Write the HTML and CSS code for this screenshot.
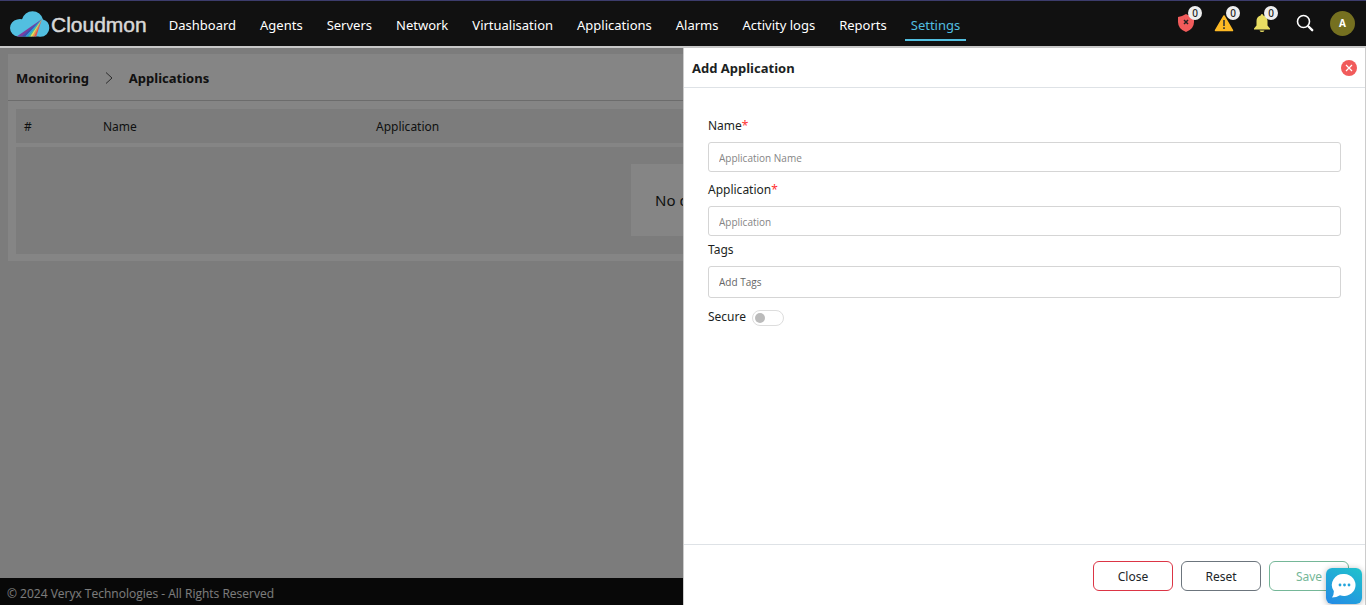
FILE: index.html
```html
<!DOCTYPE html>
<html lang="en">
<head>
<meta charset="utf-8">
<title>Cloudmon - Applications</title>
<link rel="stylesheet" href="styles.css">
</head>
<body>
<div class="app">
  <header class="topbar">
    <a class="brand" href="#">
      <svg class="brand-mark" viewBox="0 0 40 26" aria-hidden="true">
        <defs><clipPath id="cloud"><circle cx="8.500" cy="17" r="8.500"/><circle cx="10" cy="15" r="7"/><circle cx="22.500" cy="11" r="10.800"/><circle cx="30.500" cy="17" r="8.800"/><rect x="8" y="13" width="23" height="12.500"/></clipPath></defs>
        <g clip-path="url(#cloud)">
          <path fill="#52bfe0" d="M0 0H40V26H0Z"/>
          <path fill="#7b3fa0" d="M32 8L6 26H12Z"/>
          <path fill="#3d4fb0" d="M32 8L11 26H15Z"/>
          <path fill="#2a9fd8" d="M32 8L15 26H18Z"/>
          <path fill="#4fc08a" d="M32 8L18 26H20Z"/>
          <path fill="#f5e14a" d="M32 8L20 26H22Z"/>
          <path fill="#f59a3a" d="M32 8L22 26H24Z"/>
          <path fill="#e8504c" d="M32 8L24 26H26Z"/>
        </g>
      </svg>
      <span class="brand-name">Cloudmon</span>
    </a>
    <nav class="nav">
      <a href="#">Dashboard</a>
      <a href="#">Agents</a>
      <a href="#">Servers</a>
      <a href="#">Network</a>
      <a href="#">Virtualisation</a>
      <a href="#">Applications</a>
      <a href="#">Alarms</a>
      <a href="#">Activity logs</a>
      <a href="#">Reports</a>
      <a class="active" href="#">Settings</a>
    </nav>
    <div class="tools">
      <div class="alerts">
        <button class="tool" aria-label="Critical alarms">
          <svg width="20" height="20" viewBox="0 0 20 20"><path fill="#f15b5b" d="M10 1Q14 3.500 18 4V9Q18 16 10 19Q2 16 2 9V4Q6 3.500 10 1Z"/><path stroke="#222" stroke-width="1.500" d="M8 7L12 11M12 7L8 11"/></svg>
          <span class="badge">0</span>
        </button>
        <button class="tool" aria-label="Warnings">
          <svg width="20" height="20" viewBox="0 0 20 20"><path fill="#fdb924" stroke="#fdb924" stroke-width="1.500" stroke-linejoin="round" d="M10 3L18.500 17.500H1.500Z"/><path stroke="#333" stroke-width="1.600" d="M10 7V13M10 14.200V16"/></svg>
          <span class="badge">0</span>
        </button>
        <button class="tool" aria-label="Notifications">
          <svg width="20" height="20" viewBox="0 0 20 20"><path fill="#e8dd62" d="M10 1Q11.300 1 11.300 2.500Q15.500 3.500 15.500 8V12.500L18 15.500V16.500H2V15.500L4.500 12.500V8Q4.500 3.500 8.700 2.500Q8.700 1 10 1ZM7.500 17.500H12.500Q12 19 10 19Q8 19 7.500 17.500Z"/></svg>
          <span class="badge">0</span>
        </button>
      </div>
      <button class="tool" aria-label="Search">
        <svg width="20" height="20" viewBox="0 0 20 20" fill="none" stroke="#fff"><circle cx="8.500" cy="8.500" r="6" stroke-width="1.600"/><path stroke-width="2.400" stroke-linecap="round" d="M13.500 13.500L17.200 17.200"/></svg>
      </button>
      <button class="avatar" aria-label="Account">A</button>
    </div>
  </header>

  <div class="stage">
    <main class="page">
      <section class="card">
        <div class="crumbs">
          <a href="#">Monitoring</a>
          <svg width="8" height="14" viewBox="0 0 8 14" fill="none" stroke="#555" aria-hidden="true"><path d="M1 1.500L7 7L1 12.500"/></svg>
          <a href="#">Applications</a>
        </div>
        <div class="listing">
          <table class="grid">
            <thead><tr><th class="col-index">#</th><th class="col-name">Name</th><th>Application</th></tr></thead>
          </table>
          <div class="empty"><p class="empty-note">No data</p></div>
        </div>
      </section>
    </main>
    <footer class="footer">© 2024 Veryx Technologies - All Rights Reserved</footer>
    <div class="backdrop"></div>
    <form class="drawer">
      <div class="drawer-head">
        <h1>Add Application</h1>
        <button class="dismiss" type="button" aria-label="Close panel">
          <svg width="16" height="16" viewBox="0 0 16 16"><circle cx="8" cy="8" r="8" fill="#f15b5b"/><path stroke="#fff" stroke-width="1.200" d="M5 5L11 11M11 5L5 11"/></svg>
        </button>
      </div>
      <div class="drawer-body">
        <div class="field">
          <label for="name">Name<span class="req">*</span></label>
          <input id="name" type="text" placeholder="Application Name">
        </div>
        <div class="field">
          <label for="application">Application<span class="req">*</span></label>
          <input id="application" type="text" placeholder="Application">
        </div>
        <div class="field tags">
          <label for="tags">Tags</label>
          <input id="tags" type="text" placeholder="Add Tags">
        </div>
        <div class="switch-row">
          <label for="secure">Secure</label>
          <input id="secure" class="switch" type="checkbox" role="switch">
        </div>
      </div>
      <div class="drawer-foot">
        <button class="btn btn-close" type="button">Close</button>
        <button class="btn btn-reset" type="reset">Reset</button>
        <button class="btn btn-save" type="submit" disabled>Save</button>
      </div>
    </form>
    <button class="chat" aria-label="Open chat">
      <svg width="26" height="26" viewBox="0 0 26 26"><path fill="#fff" d="M13.500 1A11.500 11 0 1 1 9 22.300Q5.500 24.500 1 24.500Q3 22 2.800 18A11.500 11 0 0 1 13.500 1Z"/><g fill="#22a4dc"><circle cx="9" cy="12" r="1.400"/><circle cx="13.500" cy="12" r="1.400"/><circle cx="18" cy="12" r="1.400"/></g></svg>
    </button>
  </div>
</div>
</body>
</html>
```
FILE: styles.css
```css
* { box-sizing: border-box; }
body { margin: 0; font-family: "Noto Sans", "Open Sans", sans-serif; font-size: 12px; line-height: 16px; color: #1c1f23; }
a { color: inherit; text-decoration: none; }
button, input { font: inherit; color: inherit; }
button { padding: 0; border: 0; background: none; cursor: pointer; }
svg { display: block; }

.app { display: flex; flex-direction: column; min-height: 100vh; background: #eee; }

.topbar { display: flex; align-items: center; height: 48px; padding: 0 11px 0 10px; background: #111; border-top: 1px solid #3c3c6c; border-bottom: 2px solid #c8c8c8; }
.brand { display: flex; align-items: center; gap: 1px; color: #d8d8d8; }
.brand-mark { width: 40px; height: 26px; }
.brand-name { padding-top: 3px; font: 21px/24px "Liberation Sans", Arial, sans-serif; -webkit-text-stroke: 0.5px #d8d8d8; }
.nav { display: flex; gap: 12px; margin-left: 16px; font-size: 13px; line-height: 20px; color: #fff; white-space: nowrap; }
.nav a { padding: 9px 6px 4px; border-bottom: 2px solid transparent; }
.nav .active { color: #52bfe0; border-color: #52bfe0; }
.tools { display: flex; align-items: center; gap: 15px; margin-left: auto; padding-bottom: 1px; }
.alerts { display: flex; gap: 18px; margin-right: 8px; }
.tool { position: relative; }
.badge { position: absolute; top: -7px; right: -6px; width: 14px; height: 14px; border-radius: 7px; background: #eee; color: #222; font-size: 10px; font-weight: 500; line-height: 14px; text-align: center; }
.avatar { width: 25px; height: 25px; border-radius: 50%; background: #757020; color: #fff; font-size: 10px; font-weight: 700; }

.stage { position: relative; display: flex; flex: 1; flex-direction: column; }
.page { flex: 1; padding: 6px 8px; }
.card { background: #fff; }
.crumbs { display: flex; align-items: center; gap: 16px; height: 47px; padding: 2px 8px 0; border-bottom: 1px solid #d0d0d0; font-size: 13px; font-weight: 700; color: #222; }
.listing { padding: 8px 8px 7px; }
.grid { width: 100%; height: 34px; border-collapse: collapse; background: #eee; }
.grid th { padding: 2px 8px 0; font-weight: 400; text-align: left; }
.grid .col-index { width: 79px; }
.grid .col-name { width: 273px; }
.empty { display: flex; justify-content: center; margin-top: 4px; padding: 17px 0 18px; background: #eee; }
.empty-note { margin: 0; padding: 24px; background: #fff; font-size: 15px; line-height: 24px; }
.footer { padding: 8px 7px 3px; background: #111; color: #eee; font-family: "Open Sans", sans-serif; }
.backdrop { position: absolute; inset: 0; background: rgba(0, 0, 0, 0.48); }

.drawer { position: absolute; inset: 0 0 0 auto; width: 50%; display: flex; flex-direction: column; background: #fff; border: solid #ccc; border-width: 0 1px; }
.drawer-head { display: flex; align-items: center; justify-content: space-between; height: 40px; padding: 0 8px; border-bottom: 1px solid #dee2e6; }
.drawer-head h1 { margin: 0; font-size: 13px; line-height: 20px; font-weight: 700; }
.drawer-body { flex: 1; padding: 30px 24px; }
.field { display: flex; flex-direction: column; gap: 8px; margin-bottom: 10px; }
.field input { width: 100%; height: 30px; padding: 2px 10px 0; border: 1px solid #d5d5d5; border-radius: 3px; background: #fff; font-family: "Open Sans", sans-serif; font-size: 10px; outline: 0; }
.field input::placeholder { color: #858585; opacity: 1; }
.field.tags { margin-top: -4px; }
.field.tags input { height: 32px; padding-top: 0; }
.field.tags input::placeholder { color: #666; }
.req { color: #f33; }
.switch-row { display: flex; align-items: center; gap: 6px; }
.switch { appearance: none; width: 32px; height: 16px; margin: 2px 0 0; padding: 2px; border: 1px solid #ddd; border-radius: 8px; background: #fff; }
.switch::before { content: ""; display: block; width: 10px; height: 10px; border-radius: 50%; background: #bbb; }
.switch:checked::before { margin-left: auto; background: #52bfe0; }
.drawer-foot { display: flex; justify-content: flex-end; gap: 8px; padding: 16px 16px 14px; border-top: 1px solid #dee2e6; }
.btn { width: 80px; height: 30px; padding-top: 2px; border: 1px solid; border-radius: 6px; background: #fff; color: #212529; }
.btn-close { border-color: #dc3545; }
.btn-reset { border-color: #6c757d; }
.btn-save { border-color: #75b798; color: #75b798; }
.chat { position: absolute; right: 4px; bottom: 1px; display: grid; place-items: center; width: 36px; height: 36px; border-radius: 6px; background: linear-gradient(30deg, #2489e6, #20c3cc); box-shadow: 0 1px 6px rgba(0, 0, 0, 0.3); }
```
